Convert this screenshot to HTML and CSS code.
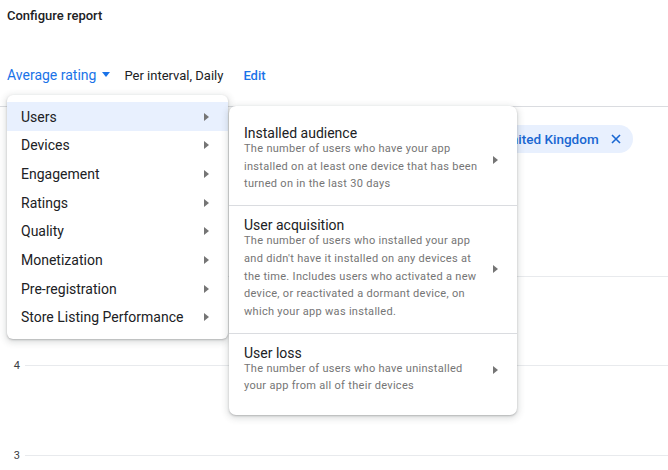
FILE: index.html
```html
<!DOCTYPE html>
<html>
<head>
<meta charset="utf-8">
<link rel="stylesheet" href="styles.css">
</head>
<body>
<div class="page">
  <h1 class="title">Configure report</h1>
  <div class="toolbar">
    <span class="metric">Average rating<span class="caret"></span></span>
    <span class="interval">Per interval, Daily</span>
    <span class="edit">Edit</span>
  </div>
  <section class="chart">
    <div class="filters">
      <span class="chip">United Kingdom
        <svg class="chip-x" width="10" height="10" viewBox="0 0 10 10"><path d="M1 1L9 9M9 1L1 9" stroke="#1967d2" stroke-width="1.6" fill="none"/></svg>
      </span>
    </div>
    <div class="grid">
      <div class="grid-row"><span class="axis">5</span><span class="gridline"></span></div>
      <div class="grid-row"><span class="axis">4</span><span class="gridline"></span></div>
      <div class="grid-row"><span class="axis">3</span><span class="gridline"></span></div>
    </div>
  </section>

  <ul class="menu">
    <li class="menu-item active">Users<span class="arrow"></span></li>
    <li class="menu-item">Devices<span class="arrow"></span></li>
    <li class="menu-item">Engagement<span class="arrow"></span></li>
    <li class="menu-item">Ratings<span class="arrow"></span></li>
    <li class="menu-item">Quality<span class="arrow"></span></li>
    <li class="menu-item">Monetization<span class="arrow"></span></li>
    <li class="menu-item">Pre-registration<span class="arrow"></span></li>
    <li class="menu-item">Store Listing Performance<span class="arrow"></span></li>
  </ul>

  <ul class="submenu">
    <li class="sub-item">
      <div class="sub-text">
        <div class="sub-title">Installed audience</div>
        <div class="sub-desc">The number of users who have your app installed on at least one device that has been turned on in the last 30 days</div>
      </div>
      <span class="arrow"></span>
    </li>
    <li class="sub-item">
      <div class="sub-text">
        <div class="sub-title">User acquisition</div>
        <div class="sub-desc">The number of users who installed your app and didn't have it installed on any devices at the time. Includes users who activated a new device, or reactivated a dormant device, on which your app was installed.</div>
      </div>
      <span class="arrow"></span>
    </li>
    <li class="sub-item">
      <div class="sub-text">
        <div class="sub-title">User loss</div>
        <div class="sub-desc">The number of users who have uninstalled your app from all of their devices</div>
      </div>
      <span class="arrow"></span>
    </li>
  </ul>
</div>
</body>
</html>
```

FILE: styles.css
```css
* { box-sizing: border-box; }
html, body { margin: 0; padding: 0; background: #fff; }
body {
  font-family: Roboto, "Liberation Sans", Arial, sans-serif;
  color: #202124;
  width: 668px;
  height: 470px;
  overflow: hidden;
}
.page { position: relative; height: 470px; }

.title {
  margin: 0;
  padding: 8px 7px 0;
  font-size: 13px;
  font-weight: 500;
  line-height: 16px;
}

.toolbar {
  display: flex;
  align-items: center;
  height: 20px;
  margin-top: 41px;
  padding-left: 7px;
  font-size: 13px;
}
.metric {
  color: #1a73e8;
  font-size: 14px;
  display: inline-flex;
  align-items: center;
}
.caret {
  display: inline-block;
  width: 0; height: 0;
  border-left: 4px solid transparent;
  border-right: 4px solid transparent;
  border-top: 5px solid #1a73e8;
  margin-left: 6px;
  margin-top: -1px;
}
.interval { margin-left: 14px; color: #202124; }
.edit { margin-left: 20px; color: #1a73e8; font-weight: 500; }

.chart {
  margin-top: 21px;
  border-top: 1px solid #dadce0;
}
.filters {
  display: flex;
  padding-top: 18px;
  padding-left: 490px;
}
.chip {
  display: inline-flex;
  align-items: center;
  height: 28px;
  padding: 0 12px 0 12px;
  border-radius: 14px;
  background: #e8f0fe;
  color: #1967d2;
  font-size: 13.5px;
  font-weight: 500;
  white-space: nowrap;
}
.chip-x { margin-left: 12px; }

.grid {
  display: flex;
  flex-direction: column;
  gap: 69.5px;
  margin-top: 113px;
}
.grid-row {
  display: flex;
  align-items: center;
  height: 20px;
}
.axis {
  width: 20px;
  text-align: right;
  font-size: 11px;
  color: #3c4043;
}
.gridline {
  flex: 1;
  height: 1px;
  margin-left: 5px;
  background: #e8eaed;
}

.menu, .submenu {
  list-style: none;
  margin: 0;
  position: absolute;
  background: #fff;
  box-shadow: 0 1px 2px 0 rgba(60,64,67,.3), 0 2px 6px 2px rgba(60,64,67,.15);
}
.menu {
  left: 7px;
  top: 95px;
  width: 221px;
  padding: 7.3px 0;
  border-radius: 6px;
  z-index: 1;
}
.menu-item {
  display: flex;
  align-items: center;
  justify-content: space-between;
  height: 28.7px;
  padding: 0 19px 0 14px;
  font-size: 14px;
  color: #202124;
}
.menu-item.active { background: #e8f0fe; }

.arrow {
  display: inline-block;
  width: 0; height: 0;
  border-top: 4px solid transparent;
  border-bottom: 4px solid transparent;
  border-left: 5px solid #757575;
  flex: none;
}

.submenu {
  left: 229px;
  top: 106px;
  width: 288px;
  padding: 8px 0;
  border-radius: 7px;
  z-index: 2;
}
.sub-item {
  display: flex;
  align-items: center;
  padding: 12px 19px 12px 15px;
  border-top: 1px solid #dadce0;
}
.sub-item:first-child { border-top: none; }
.sub-text { flex: 1; }
.sub-title {
  font-size: 14px;
  line-height: 14px;
  color: #202124;
}
.sub-desc {
  font-size: 11px;
  letter-spacing: 0.3px;
  line-height: 17.7px;
  color: #757575;
  width: 238px;
}
```
